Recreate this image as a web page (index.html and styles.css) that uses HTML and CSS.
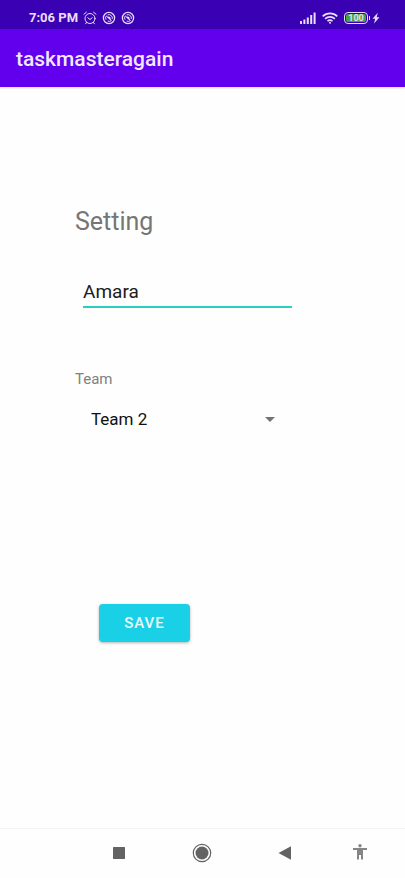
FILE: index.html
```html
<!DOCTYPE html>
<html lang="en">
<head>
<meta charset="utf-8">
<meta name="viewport" content="width=device-width, initial-scale=1">
<title>taskmasteragain</title>
<link rel="stylesheet" href="styles.css">
</head>
<body>
<div class="status-bar">
  <div class="status-group">
    <span class="clock">7:06 PM</span>
    <svg class="status-icon" viewBox="0 0 14 14" fill="none" stroke="currentColor" stroke-linecap="round">
      <circle cx="7" cy="7.5" r="5"/><path d="M1 3.2 3.4 1.2M13 3.2 10.600 1.200M4.800 6.800 7 8.500 9.200 6.800M3.500 11.500 2.600 12.800M10.500 11.500 11.400 12.800"/>
    </svg>
    <svg class="status-icon" viewBox="0 0 14 14" fill="none" stroke="currentColor">
      <circle cx="7" cy="7" r="5.600" stroke-width="1.300"/><path d="M4.100 8.700A3.400 3.400 0 0 1 4.300 4.900L9.400 9.500A3.400 3.400 0 0 1 5.700 10.100M5.600 3.900A3.400 3.400 0 0 1 10.200 8"/><path d="M5.200 6.200 8.800 9.400 8.300 6.200Q6.800 4.800 5.200 6.200Z" fill="currentColor" stroke="none"/>
    </svg>
    <svg class="status-icon" viewBox="0 0 14 14" fill="none" stroke="currentColor">
      <circle cx="7" cy="7" r="5.600" stroke-width="1.300"/><path d="M4.100 8.700A3.400 3.400 0 0 1 4.300 4.900L9.400 9.500A3.400 3.400 0 0 1 5.700 10.100M5.600 3.900A3.400 3.400 0 0 1 10.200 8"/><path d="M5.200 6.200 8.800 9.400 8.300 6.200Q6.800 4.800 5.200 6.200Z" fill="currentColor" stroke="none"/>
    </svg>
  </div>
  <div class="status-group status-right">
    <svg class="signal" viewBox="0 0 16 12" fill="currentColor"><path d="M0 9h2v3H0zM3.400 7.500h2V12h-2zM6.800 5.500h2V12h-2zM10.200 3h2v9h-2zM13.600 0.500h2V12h-2z"/></svg>
    <svg class="wifi" viewBox="0 0 16 12" fill="none" stroke="currentColor" stroke-width="1.600"><path d="M.7 4.400a10.300 10.300 0 0 1 14.600 0M3.100 6.900a6.900 6.900 0 0 1 9.800 0M5.500 9.200a3.500 3.500 0 0 1 5 0"/><circle cx="8" cy="10.700" r="1" fill="currentColor" stroke="none"/></svg>
    <span class="battery"><span class="battery-level">100</span></span>
    <svg class="bolt" viewBox="0 0 8 12" fill="currentColor"><path d="M5.800.8.500 6.800h2.700L2 11.400l5.500-6.200H4.700z"/></svg>
  </div>
</div>
<header class="app-bar"><h1 class="app-title">taskmasteragain</h1></header>
<main class="content">
  <form class="settings">
    <h2 class="heading">Setting</h2>
    <input class="name-input" type="text" value="Amara" aria-label="Name">
    <label class="team-label" for="team">Team</label>
    <div class="team-picker">
      <select class="team-select" id="team"><option>Team 1</option><option selected>Team 2</option><option>Team 3</option></select>
      <svg class="caret" viewBox="0 0 10 5" fill="currentColor"><path d="M0 0h10L5 5z"/></svg>
    </div>
    <button class="save" type="button">SAVE</button>
  </form>
</main>
<nav class="nav-bar" aria-label="System navigation">
  <button class="nav-button" type="button" aria-label="Recents"><svg class="nav-icon" viewBox="0 0 20 20" fill="currentColor"><rect x="4" y="4" width="12" height="12" rx=".5"/></svg></button>
  <button class="nav-button" type="button" aria-label="Home"><svg class="nav-icon" viewBox="0 0 20 20"><circle cx="10" cy="10" r="8.700" fill="none" stroke="currentColor" stroke-width="1.200"/><circle cx="10" cy="10" r="6.500" fill="currentColor"/></svg></button>
  <button class="nav-button" type="button" aria-label="Back"><svg class="nav-icon" viewBox="0 0 20 20" fill="currentColor"><path d="M3.500 10 16 3.300v13.400z"/></svg></button>
  <button class="nav-button nav-access" type="button" aria-label="Accessibility"><svg class="nav-icon" viewBox="0 0 20 20" fill="currentColor"><circle cx="10" cy="2.800" r="1.700"/><path d="M3 5h14v2h-4v9.500h-2V12H9v4.500H7V7H3z"/></svg></button>
</nav>
</body>
</html>
```
FILE: styles.css
```css
* { box-sizing: border-box; }

body {
  margin: 0;
  min-height: 100vh;
  display: flex;
  flex-direction: column;
  background: #fefefe;
  font-family: Roboto, "Liberation Sans", sans-serif;
}

svg { display: block; flex: none; }

button, input, select { font-family: inherit; }

.status-bar {
  display: flex;
  justify-content: space-between;
  align-items: center;
  height: 29px;
  padding: 7px 25px 0 29px;
  background: #3a00b3;
  color: #e9defa;
}

.status-group { display: flex; align-items: center; gap: 5px; }
.status-right { gap: 6px; }
.clock { font-size: 13px; line-height: 16px; font-weight: 700; }
.status-icon { width: 14px; height: 14px; }
.signal, .wifi { width: 16px; height: 12px; }
.bolt { width: 8px; height: 12px; margin-left: -2px; }

.battery {
  position: relative;
  width: 24px;
  height: 12px;
  padding: 1px;
  border: 1px solid currentColor;
  border-radius: 4px;
}

.battery::after {
  content: "";
  position: absolute;
  top: 3px;
  right: -3px;
  width: 1px;
  height: 4px;
  background: currentColor;
}

.battery-level {
  display: block;
  border-radius: 2px;
  background: #48a344;
  font-size: 9px;
  line-height: 8px;
  font-weight: 700;
  text-align: center;
}

.app-bar {
  display: flex;
  align-items: center;
  height: 58px;
  padding: 2px 16px 0;
  background: #6200ee;
  box-shadow: 0 1px 2px rgba(0, 0, 0, 0.15);
}

.app-title {
  margin: 0;
  color: #f2e8fe;
  font-size: 21px;
  line-height: 28px;
  font-weight: 500;
}

.content { flex: 1; padding: 119px 109px 0 75px; }

.settings { display: flex; flex-direction: column; align-items: flex-start; }

.heading {
  margin: 0;
  color: #757575;
  font-size: 25px;
  line-height: 32px;
  font-weight: 400;
}

.name-input {
  align-self: stretch;
  height: 32px;
  margin: 38px 4px 0 8px;
  padding: 1px 0 0;
  border: 0;
  border-bottom: 2px solid #26d2bd;
  outline: 0;
  background: transparent;
  color: #1c1c1c;
  font-size: 19px;
}

.team-label {
  margin-top: 61px;
  color: #808080;
  font-size: 15px;
  line-height: 20px;
}

.team-picker {
  display: flex;
  align-items: center;
  align-self: stretch;
  margin-top: 18px;
  padding-right: 21px;
}

.team-select {
  flex: 1;
  height: 24px;
  padding: 0 0 0 16px;
  appearance: none;
  border: 0;
  outline: 0;
  background: transparent;
  color: #111;
  font-size: 17px;
}

.caret { width: 10px; height: 5px; color: #737373; }

.save {
  width: 91px;
  height: 38px;
  margin: 173px 0 0 24px;
  padding: 0;
  border: 0;
  border-radius: 4px;
  background: #1ad0e7;
  box-shadow: 0 1px 3px rgba(0, 0, 0, 0.3);
  color: #e8fbfe;
  font-size: 15px;
  font-weight: 500;
  letter-spacing: 1px;
}

.nav-bar {
  display: grid;
  grid-template-columns: repeat(3, 1fr) 66px;
  height: 50px;
  padding: 0 12px 2px 77px;
  border-top: 1px solid #f4f4f4;
}

.nav-button {
  display: flex;
  align-items: center;
  justify-content: center;
  padding: 0;
  border: 0;
  background: transparent;
  color: #636363;
}

.nav-icon { width: 20px; height: 20px; }
.nav-access { color: #858585; }
```
